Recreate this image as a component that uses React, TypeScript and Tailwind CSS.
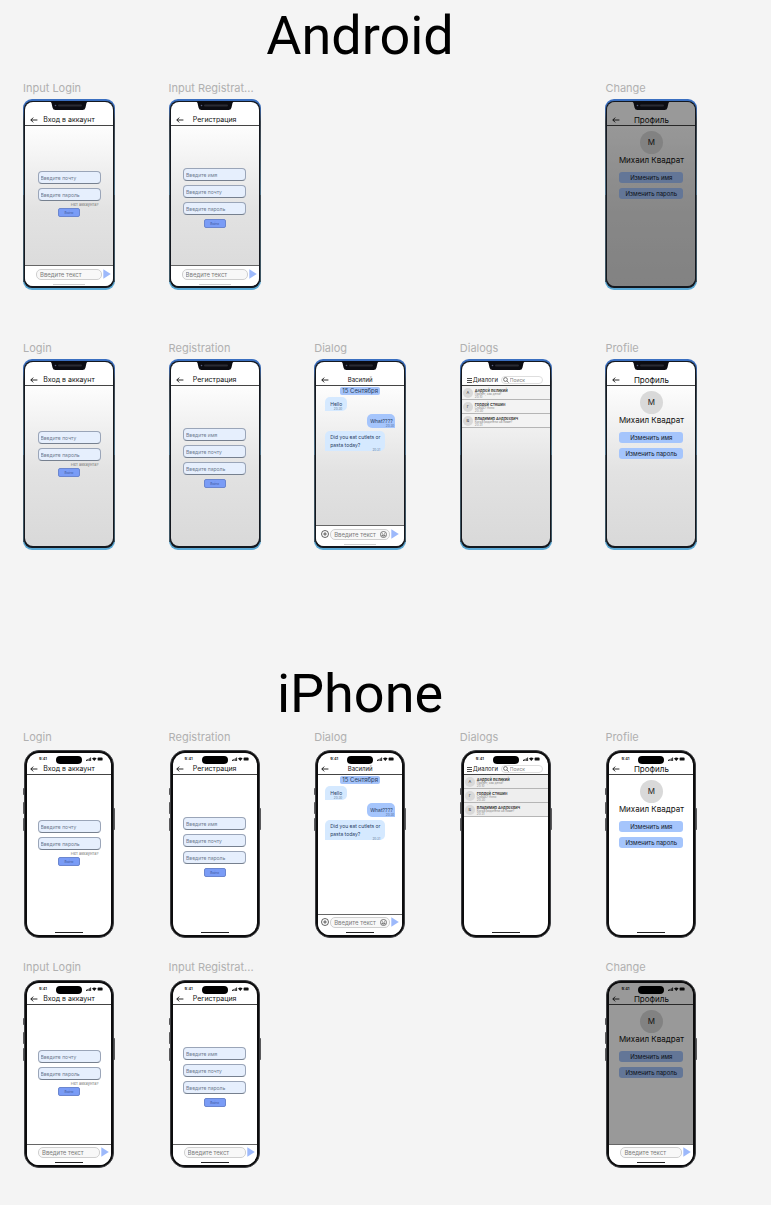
import React, { useId } from "react";

type Kind = "android" | "iphone";

const SendIcon = () => (
  <svg viewBox="0 0 8 10" className="h-[10px] w-[8px]" aria-hidden="true">
    <path d="M0.3 0.2 L7.8 5 L0.3 9.8 Z" fill="#9db9fb" />
  </svg>
);

const BackIcon = () => (
  <svg viewBox="0 0 8 8" className="h-[8px] w-[8px]" fill="none" stroke="#111" strokeWidth="0.9" aria-hidden="true">
    <path d="M7.4 4H0.8M3.2 1.6L0.8 4l2.4 2.4" />
  </svg>
);

const PlusIcon = () => (
  <svg viewBox="0 0 8 8" className="h-[8px] w-[8px]" fill="none" stroke="#222" strokeWidth="0.7" aria-hidden="true">
    <circle cx="4" cy="4" r="3.5" />
    <path d="M4 2.2v3.6M2.2 4h3.6" />
  </svg>
);

const SmileIcon = () => (
  <svg viewBox="0 0 8 8" className="h-[7px] w-[7px]" fill="none" stroke="#333" strokeWidth="0.7" aria-hidden="true">
    <circle cx="4" cy="4" r="3.5" />
    <path d="M2 4.6c.6 1.7 3.4 1.7 4 0z" />
    <path d="M2.5 2.8h.7M4.800 2.8h.7" />
  </svg>
);

const MenuIcon = () => (
  <svg viewBox="0 0 5 6" className="h-[6px] w-[5px]" stroke="#222" strokeWidth="0.8" aria-hidden="true">
    <path d="M0 1.500h5M0 3.500h5M0 5.500h5" />
  </svg>
);

const SearchIcon = () => (
  <svg viewBox="0 0 6 6" className="h-[6px] w-[6px] shrink-0" fill="none" stroke="#444" strokeWidth="0.7" aria-hidden="true">
    <circle cx="2.5" cy="2.5" r="1.9" />
    <path d="M3.9 3.9L5.6 5.6" />
  </svg>
);

function Field({ placeholder }: { placeholder: string }) {
  return (
    <input
      type="text"
      aria-label={placeholder}
      placeholder={placeholder}
      className="h-[13px] w-[63px] rounded-[4px] border border-[#9aa5b8] border-b-[#76808f] bg-[#e6effd] px-[2px] text-[5px] leading-[8px] placeholder:text-[#6f7c90]"
    />
  );
}

function Submit() {
  return (
    <button className="h-[9px] w-[22px] rounded-[2px] border border-[#6b86cf] bg-[#7a9cf6] text-center text-[3px] leading-[6px] text-[#3b559c]">
      Войти
    </button>
  );
}

function LoginForm() {
  return (
    <form className="flex flex-col items-center pt-[45px]">
      <Field placeholder="Введите почту" />
      <div className="h-[4px]" />
      <Field placeholder="Введите пароль" />
      <a href="#registration" className="mt-px w-[59px] text-right text-[4px] leading-[6px] text-[#777]">
        Нет аккаунта?
      </a>
      <Submit />
    </form>
  );
}

function RegistrationForm() {
  return (
    <form className="flex flex-col items-center gap-[4px] pt-[42px]">
      <Field placeholder="Введите имя" />
      <Field placeholder="Введите почту" />
      <Field placeholder="Введите пароль" />
      <Submit />
    </form>
  );
}

function Chat() {
  return (
    <div className="mx-auto flex w-[70px] flex-col text-[5px] leading-[8px] text-[#27405f]">
      <div className="mx-auto mt-px w-[40px] rounded-[2px] bg-[#a5c3fa] text-center text-[6px]">15 Сентября</div>
      <div className="mt-[2px] w-[22px] rounded-[5px] rounded-bl-none bg-[#d5e9ff] px-[5px] pt-[3px]">
        <p>Hello</p>
        <p className="text-right text-[3px] leading-[3px] text-[#5d7796]">20:30</p>
      </div>
      <div className="mt-[3px] w-[28px] self-end rounded-[5px] rounded-br-none bg-[#a5c5fc] pt-[3px] pr-px pl-[3px]">
        <p>What????</p>
        <p className="text-right text-[3px] leading-[3px] text-[#4b6a9c]">20:30</p>
      </div>
      <div className="mt-[3px] w-[60px] rounded-[5px] rounded-bl-none bg-[#d5e9ff] pt-[2px] pr-[5px] pl-[5px]">
        <p className="whitespace-nowrap">
          Did you eat cutlets or
          <br />
          pasta today?
        </p>
        <p className="text-right text-[3px] leading-[2px] text-[#5d7796]">20:31</p>
      </div>
    </div>
  );
}

const people = [
  { letter: "А", name: "Андрей Великий", last: "Привет, как дела?", time: "20:10" },
  { letter: "Г", name: "Гордей Стяшин", last: "Спишь? Алло", time: "20:30" },
  { letter: "В", name: "Владимир Андреевич", last: "Когда родители на ламе?", time: "20:31" },
];

function DialogList({ kind }: { kind: Kind }) {
  return (
    <ul className={kind === "iphone" ? "bg-[#eeeeee]" : "bg-[#f3f3f3]"}>
      {people.map((p) => (
        <li key={p.name} className="flex h-[14px] items-center gap-[2px] border-b border-[#b5b5b5] pl-px">
          <span className="size-[10px] shrink-0 rounded-full bg-[#d9d9d9] text-center text-[4px] leading-[10px] text-[#333]">
            {p.letter}
          </span>
          <div className="pt-px whitespace-nowrap">
            <p className="text-[4px] leading-[5px] font-medium text-[#111]">{p.name}</p>
            <p className="text-[3px] leading-[3px] text-[#888]">{p.last}</p>
            <p className="text-[3px] leading-[3px] text-[#888]">{p.time}</p>
          </div>
        </li>
      ))}
    </ul>
  );
}

function ProfileCard() {
  const action = "h-[11px] w-[64px] rounded-[3px] bg-[#a5c5fc] text-center text-[6px] leading-[11px] text-[#10182a]";
  return (
    <div className="flex flex-col items-center pt-[5px]">
      <div className="size-[23px] rounded-full bg-[#d9d9d9] text-center text-[8px] leading-[23px] text-[#222]">М</div>
      <p className="mt-px text-[8px] leading-[11px] whitespace-nowrap text-[#111]">Михаил Квадрат</p>
      <button className={action + " mt-[6px]"}>Изменить имя</button>
      <button className={action + " mt-[5px]"}>Изменить пароль</button>
    </div>
  );
}

const titleSizes = { sm: "text-[6px]", md: "text-[7px]", lg: "text-[8px]" };

function TitleBar({ title, size = "md" }: { title: string; size?: keyof typeof titleSizes }) {
  return (
    <header className="border-b border-[#444]">
      <div className="mx-auto grid h-[12px] w-[78px] grid-cols-[8px_1fr_8px] items-center pt-[2px]">
        <button aria-label="Назад">
          <BackIcon />
        </button>
        <h3 className={titleSizes[size] + " text-center leading-[10px] whitespace-nowrap text-[#111]"}>{title}</h3>
      </div>
    </header>
  );
}

function SearchBar() {
  return (
    <header className="border-b border-[#444]">
      <div className="mx-auto flex h-[12px] w-[78px] items-center pt-[2px]">
        <button aria-label="Меню" className="flex">
          <MenuIcon />
        </button>
        <h3 className="ml-px w-[28px] text-[6px] leading-[10px] text-[#222]">Диалоги</h3>
        <label className="flex h-[8px] w-[42px] items-center gap-px rounded-[4px] border border-[#dedede] bg-white/60 pl-px">
          <SearchIcon />
          <input
            type="search"
            aria-label="Поиск"
            placeholder="Поиск"
            className="w-full min-w-0 bg-transparent text-[5px] leading-[6px] placeholder:text-[#808080]"
          />
        </label>
      </div>
    </header>
  );
}

function Composer({ kind, full }: { kind: Kind; full?: boolean }) {
  const id = useId();
  const pad = full ? "mx-auto w-[78px]" : kind === "android" ? "pl-[11px] pr-[2px]" : "pl-[11px] pr-[2px]";
  return (
    <footer className={(kind === "android" ? "pt-px" : "") + " h-[21px] border-t border-[#666] bg-white"}>
      <div className={pad + " flex h-[14px] items-center gap-px"}>
        {full && (
          <button aria-label="Прикрепить" className="flex">
            <PlusIcon />
          </button>
        )}
        <div className="flex h-[11px] min-w-0 flex-1 items-center rounded-[5px] border border-[#cfcfcf] bg-[#f8f8f8] pr-[2px] pl-[3px]">
          <input
            id={id}
            aria-label="Введите текст"
            placeholder="Введите текст"
            className="w-full min-w-0 bg-transparent text-[6px] leading-[9px] placeholder:text-[#7b7b7b]"
          />
          {full && (
            <button type="button" aria-label="Эмодзи" className="flex">
              <SmileIcon />
            </button>
          )}
        </div>
        <button aria-label="Отправить" className="flex">
          <SendIcon />
        </button>
      </div>
    </footer>
  );
}

function AndroidFrame({ children, dim }: { children: React.ReactNode; dim?: boolean }) {
  return (
    <div className="relative h-[191px] w-[92px] rounded-[9px] bg-linear-to-b from-[#3a6fc0] from-3% via-[#3c444c] via-12% to-[#5aa9d6] p-px pt-[2px] pb-[2px]">
      <div className="absolute inset-x-0 bottom-[8px] top-[50%] bg-linear-to-b from-[#42505a] to-[#3f5866]" />
      <div className="relative h-full rounded-[8px] bg-[#14181f] px-px pt-px pb-[2px]">
        <div className="relative flex h-full flex-col overflow-hidden rounded-[8px] bg-linear-to-b from-white from-10% via-[#e2e2e2] via-60% to-[#d9d9d9] pt-[11px]">
          {children}
          {dim && <div className="absolute inset-0 bg-black/40" />}
        </div>
      </div>
      <svg viewBox="0 0 38 9" className="absolute top-[2px] left-[27px] h-[9px] w-[38px]" aria-hidden="true">
        <path d="M0 0H38L36.5 2L35.5 6.5Q35 9 32.500 9H5.500Q3 9 2.500 6.500L1.500 2Z" fill="#0b0c12" />
        <rect x="8" y="3.500" width="24" height="2" rx="1" fill="#2a2b33" />
        <circle cx="5.500" cy="4.500" r="0.800" fill="#5a6180" />
      </svg>
    </div>
  );
}

function StatusBar() {
  return (
    <div className="flex h-[9px] items-start justify-between pt-[4px] pr-[8px] pl-[12px]">
      <span className="text-[4px] leading-[4px] font-semibold text-[#111]">9:41</span>
      <svg viewBox="0 0 17 4" className="h-[4px] w-[17px]" fill="#111" aria-hidden="true">
        <path d="M0 2.700h.9V4H0zM1.400 2h.9v2h-.9zM2.800 1.200h.9V4h-.9zM4.200.4h.9V4h-.9z" />
        <path d="M6 1.500Q8.300-.5 10.600 1.500L8.300 4Z" />
        <rect x="11.600" y="0.600" width="5" height="3" rx="0.900" />
      </svg>
    </div>
  );
}

function IphoneFrame({ children, dim, footer }: { children: React.ReactNode; dim?: boolean; footer?: React.ReactNode }) {
  return (
    <div className="relative h-[188px] w-[92px] px-px">
      <svg viewBox="0 0 92 188" className="absolute inset-0 h-full w-full" fill="#5a5a5c" aria-hidden="true">
        <rect x="0" y="38" width="2" height="7" rx="0.800" />
        <rect x="0" y="52" width="2" height="12" rx="0.800" />
        <rect x="0" y="68" width="2" height="13" rx="0.800" />
        <rect x="90" y="58" width="2" height="22" rx="0.800" />
      </svg>
      <div className="relative h-full rounded-[15px] border border-[#3f4043] bg-[#0c0c0d] p-[2px]">
        <div className="relative flex h-full flex-col overflow-hidden rounded-[12px] bg-white">
          <div className="relative min-h-0 flex-1">
            <StatusBar />
            {children}
            {dim && <div className="absolute inset-0 bg-black/40" />}
          </div>
          {footer}
          <div className="absolute bottom-[2px] left-1/2 h-px w-[28px] -translate-x-1/2 bg-[#222]" />
        </div>
        <div className="absolute top-[5px] left-1/2 h-[8px] w-[26px] -translate-x-1/2 rounded-full bg-black" />
      </div>
    </div>
  );
}

type Screen = "login" | "registration" | "dialog" | "dialogs" | "profile" | "empty";

interface Frame {
  label: string;
  screen: Screen;
  composer?: boolean;
  dim?: boolean;
}

function ScreenBody({ screen, kind }: { screen: Screen; kind: Kind }) {
  switch (screen) {
    case "login":
      return (<><TitleBar title="Вход в аккаунт" /><LoginForm /></>);
    case "registration":
      return (<><TitleBar title="Регистрация" /><RegistrationForm /></>);
    case "dialog":
      return (<><TitleBar title="Василий" size="sm" /><Chat /></>);
    case "dialogs":
      return (<><SearchBar /><DialogList kind={kind} /></>);
    case "profile":
      return (<><TitleBar title="Профиль" size="lg" /><ProfileCard /></>);
    default:
      return null;
  }
}

function Device({ frame, kind }: { frame: Frame; kind: Kind }) {
  if (frame.screen === "empty") return <div />;
  const composer = frame.composer ? <Composer kind={kind} full={frame.screen === "dialog"} /> : null;
  return (
    <figure className={"flex flex-col " + (kind === "android" ? "gap-[3px]" : "gap-[5px]")}>
      <figcaption className="h-[16px] text-[11px] leading-[16px] whitespace-nowrap text-[#b0b0b0]">{frame.label}</figcaption>
      {kind === "android" ? (
        <AndroidFrame dim={frame.dim}>
          <div className="min-h-0 flex-1">
            <ScreenBody screen={frame.screen} kind={kind} />
          </div>
          {composer}
          {composer && <div className="absolute bottom-px left-1/2 h-px w-[32px] -translate-x-1/2 bg-[#cfcfcf]" />}
        </AndroidFrame>
      ) : (
        <IphoneFrame dim={frame.dim} footer={composer}>
          <ScreenBody screen={frame.screen} kind={kind} />
        </IphoneFrame>
      )}
    </figure>
  );
}

const mainRow: Frame[] = [
  { label: "Login", screen: "login" },
  { label: "Registration", screen: "registration" },
  { label: "Dialog", screen: "dialog", composer: true },
  { label: "Dialogs", screen: "dialogs" },
  { label: "Profile", screen: "profile" },
];

const inputRow = (changeComposer: boolean): Frame[] => [
  { label: "Input Login", screen: "login", composer: true },
  { label: "Input Registrat...", screen: "registration", composer: true },
  { label: "", screen: "empty" },
  { label: "", screen: "empty" },
  { label: "Change", screen: "profile", dim: true, composer: changeComposer },
];

function Row({ frames, kind }: { frames: Frame[]; kind: Kind }) {
  return (
    <div className="grid grid-cols-5">
      {frames.map((f, i) => (
        <Device key={i} frame={f} kind={kind} />
      ))}
    </div>
  );
}

function Title({ children }: { children: string }) {
  return (
    <h2 className="pr-[54px] text-center font-['Roboto',sans-serif] text-[54px] leading-[64px] text-black">{children}</h2>
  );
}

export default function App() {
  return (
    <main className="min-h-screen bg-[#f4f4f4] pt-[4px] pr-[20px] pb-[37px] pl-[23px] font-['Inter',sans-serif]">
      <section>
        <Title>Android</Title>
        <div className="mt-[12px] flex flex-col gap-[50px]">
          <Row frames={inputRow(false)} kind="android" />
          <Row frames={mainRow} kind="android" />
        </div>
      </section>
      <section className="mt-[112px]">
        <Title>iPhone</Title>
        <div className="mt-[3px] flex flex-col gap-[21px]">
          <Row frames={mainRow} kind="iphone" />
          <Row frames={inputRow(true)} kind="iphone" />
        </div>
      </section>
    </main>
  );
}
